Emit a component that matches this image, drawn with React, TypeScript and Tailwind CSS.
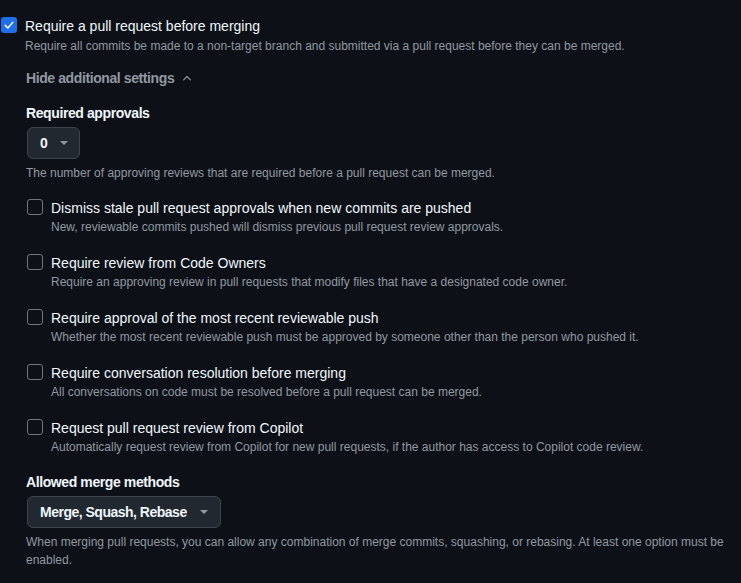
import React from "react";

const rows = [
  ["Dismiss stale pull request approvals when new commits are pushed", "New, reviewable commits pushed will dismiss previous pull request review approvals."],
  ["Require review from Code Owners", "Require an approving review in pull requests that modify files that have a designated code owner."],
  ["Require approval of the most recent reviewable push", "Whether the most recent reviewable push must be approved by someone other than the person who pushed it."],
  ["Require conversation resolution before merging", "All conversations on code must be resolved before a pull request can be merged."],
  ["Request pull request review from Copilot", "Automatically request review from Copilot for new pull requests, if the author has access to Copilot code review."],
];

function Caret() {
  return (
    <svg width="8" height="4" viewBox="0 0 8 4" className="shrink-0">
      <path d="M0 0 L8 0 L4 4 Z" fill="#9198a1" />
    </svg>
  );
}

export default function App() {
  return (
    <div
      className="w-[741px] h-[583px] overflow-hidden bg-[#0d1117] text-[#f0f6fc] pt-[16px]"
      style={{ fontFamily: '"Segoe UI", "Liberation Sans", Arial, sans-serif' }}
    >
      <div className="flex items-start gap-2 pl-[1px]">
        <div className="mt-[1px] w-4 h-4 rounded-[3px] bg-[#1f6feb] flex items-center justify-center shrink-0">
          <svg width="12" height="12" viewBox="0 0 16 16">
            <path d="M3 8.5 L6.5 12 L13 4.5" fill="none" stroke="#fff" strokeWidth="2" strokeLinecap="round" strokeLinejoin="round" />
          </svg>
        </div>
        <div className="flex flex-col">
          <div className="text-[14px] leading-[20px]">Require a pull request before merging</div>
          <div className="text-[12px] leading-[18px] text-[#9198a1] mt-[1px]">
            Require all commits be made to a non-target branch and submitted via a pull request before they can be merged.
          </div>
        </div>
      </div>

      <div className="pl-[26px] flex flex-col">
        <div className="mt-[13px] flex items-center gap-[7px] text-[14px] leading-[20px] font-semibold tracking-[-0.4px] text-[#9198a1]">
          <span>Hide additional settings</span>
          <svg width="12" height="12" viewBox="0 0 16 16">
            <path d="M3.5 10.5 L8 6 L12.5 10.5" fill="none" stroke="#9198a1" strokeWidth="1.5" strokeLinecap="round" strokeLinejoin="round" />
          </svg>
        </div>

        <div className="mt-[15px] text-[14px] leading-[20px] font-semibold tracking-[-0.4px]">Required approvals</div>
        <div className="mt-[4px] pl-[1px]">
          <div className="inline-flex items-center gap-[12px] h-[32px] pl-[12px] pr-[11px] rounded-[6px] bg-[#212830] border border-[#3d444d] text-[14px] font-semibold">
            <span>0</span>
            <Caret />
          </div>
        </div>
        <div className="mt-[5px] text-[12px] leading-[18px] text-[#9198a1]">
          The number of approving reviews that are required before a pull request can be merged.
        </div>

        <div className="mt-[16px] flex flex-col gap-[17px] pl-[1px]">
          {rows.map(([t, d]) => (
            <div key={t} className="flex items-start gap-2">
              <div className="mt-[1px] w-4 h-4 rounded-[3px] border border-[#6e7681] shrink-0" />
              <div className="flex flex-col">
                <div className="text-[14px] leading-[20px]">{t}</div>
                <div className="text-[12px] leading-[18px] text-[#9198a1]">{d}</div>
              </div>
            </div>
          ))}
        </div>

        <div className="mt-[16px] text-[14px] leading-[20px] font-semibold tracking-[-0.4px]">Allowed merge methods</div>
        <div className="mt-[4px] pl-[1px]">
          <div className="inline-flex items-center gap-[13px] h-[32px] pl-[12px] pr-[12px] rounded-[6px] bg-[#212830] border border-[#3d444d] text-[14px] font-semibold">
            <span className="tracking-[-0.5px]">Merge, Squash, Rebase</span>
            <Caret />
          </div>
        </div>
        <div className="mt-[5px] text-[12px] leading-[18px] text-[#9198a1] pr-[10px]">
          When merging pull requests, you can allow any combination of merge commits, squashing, or rebasing. At least one option must be enabled.
        </div>
      </div>
    </div>
  );
}
